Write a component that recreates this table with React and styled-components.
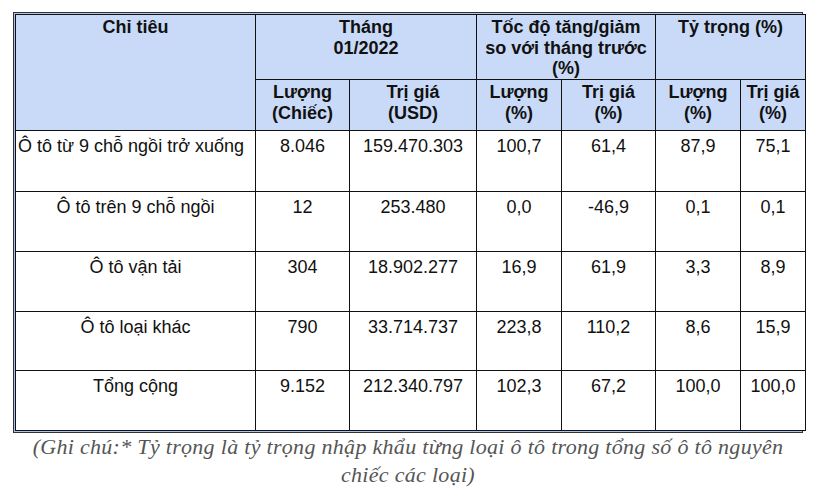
import React from 'react';
import styled, { createGlobalStyle } from 'styled-components';

const GlobalStyle = createGlobalStyle`
  body {
    margin: 0;
    background: #fff;
  }
`;

const Page = styled.div`
  width: 827px;
  height: 492px;
  padding: 12px 0 0 13px;
  box-sizing: border-box;
`;

const Frame = styled.div`
  width: 790px;
  box-sizing: border-box;
  border: 1px solid #333;
  padding: 1px;
  background: #a9c4ee;
`;

const Table = styled.table`
  width: 100%;
  border-collapse: collapse;
  table-layout: fixed;
  font-family: "Liberation Sans", Arial, sans-serif;
  font-size: 18px;
  line-height: 21px;
  color: #111;
`;

const HeadRow = styled.tr`
  height: ${(p) => p.$h}px;
`;

const HeadCell = styled.th`
  background: #c9daf8;
  border: 1px solid #111;
  font-weight: bold;
  font-size: 18px;
  line-height: 20.5px;
  text-align: center;
  vertical-align: top;
  padding: 2px 1px 0;
  white-space: nowrap;
`;

const Row = styled.tr`
  height: ${(p) => p.$h}px;
`;

const Cell = styled.td`
  background: #fff;
  border: 1px solid #111;
  text-align: ${(p) => (p.$left ? 'left' : 'center')};
  vertical-align: top;
  padding: 5px ${(p) => (p.$left ? '0 0 2px' : '2px')};
  white-space: nowrap;
`;

const Caption = styled.p`
  margin: 0;
  width: 790px;
  text-align: center;
  font-family: "Liberation Serif", "Times New Roman", serif;
  font-style: italic;
  font-size: 22px;
  letter-spacing: 0.3px;
  line-height: 28px;
  color: #555;
`;

const widths = [240, 94, 127, 85, 94, 85, 65];

const rows = [
  { name: 'Ô tô từ 9 chỗ ngồi trở xuống', left: true, h: 61, v: ['8.046', '159.470.303', '100,7', '61,4', '87,9', '75,1'] },
  { name: 'Ô tô trên 9 chỗ ngồi', h: 60, v: ['12', '253.480', '0,0', '-46,9', '0,1', '0,1'] },
  { name: 'Ô tô vận tải', h: 60, v: ['304', '18.902.277', '16,9', '61,9', '3,3', '8,9'] },
  { name: 'Ô tô loại khác', h: 59, v: ['790', '33.714.737', '223,8', '110,2', '8,6', '15,9'] },
  { name: 'Tổng cộng', h: 60, v: ['9.152', '212.340.797', '102,3', '67,2', '100,0', '100,0'] },
];

function DataRow({ row }) {
  return (
    <Row $h={row.h}>
      <Cell $left={row.left}>{row.name}</Cell>
      {row.v.map((x, i) => (
        <Cell key={i}>{x}</Cell>
      ))}
    </Row>
  );
}

export default function App() {
  return (
    <Page>
      <GlobalStyle />
      <Frame>
        <Table>
          <colgroup>
            {widths.map((w, i) => (
              <col key={i} style={{ width: w }} />
            ))}
          </colgroup>
          <thead>
            <HeadRow $h={65}>
              <HeadCell rowSpan={2}>Chỉ tiêu</HeadCell>
              <HeadCell colSpan={2}>Tháng<br />01/2022</HeadCell>
              <HeadCell colSpan={2}>Tốc độ tăng/giảm<br />so với tháng trước<br />(%)</HeadCell>
              <HeadCell colSpan={2}>Tỷ trọng (%)</HeadCell>
            </HeadRow>
            <HeadRow $h={51}>
              <HeadCell>Lượng<br />(Chiếc)</HeadCell>
              <HeadCell>Trị giá<br />(USD)</HeadCell>
              <HeadCell>Lượng<br />(%)</HeadCell>
              <HeadCell>Trị giá<br />(%)</HeadCell>
              <HeadCell>Lượng<br />(%)</HeadCell>
              <HeadCell>Trị giá<br />(%)</HeadCell>
            </HeadRow>
          </thead>
          <tbody>
            {rows.map((r) => (
              <DataRow key={r.name} row={r} />
            ))}
          </tbody>
        </Table>
      </Frame>
      <Caption>
        (Ghi chú:* Tỷ trọng là tỷ trọng nhập khẩu từng loại ô tô trong tổng số ô tô nguyên
        <br />
        chiếc các loại)
      </Caption>
    </Page>
  );
}
